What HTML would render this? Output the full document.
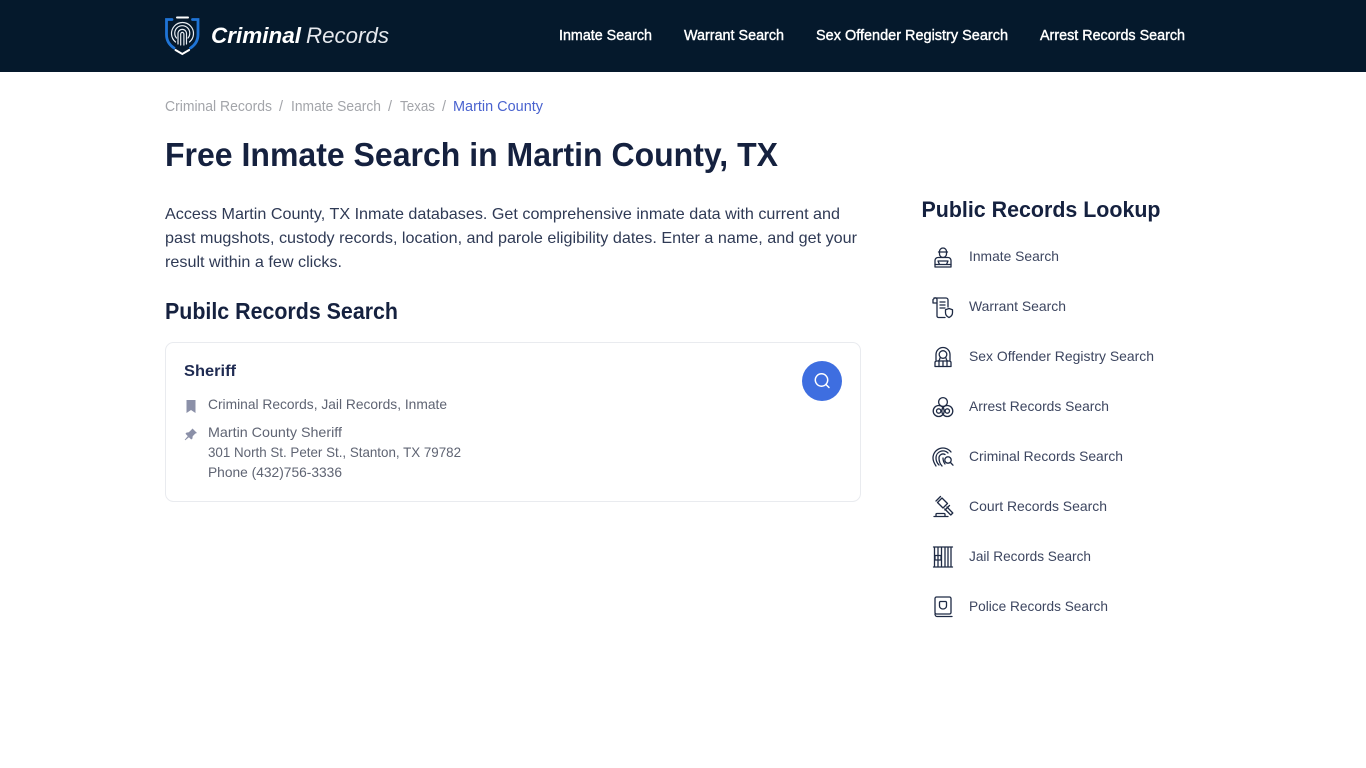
<!DOCTYPE html>
<html lang="en"><head><meta charset="utf-8"><title>Free Inmate Search in Martin County, TX</title>
<style>
html,body{margin:0;padding:0;background:#fff;width:1366px;height:768px;overflow:hidden}
svg{display:block;position:absolute;left:0;top:0}
text{font-family:"Liberation Sans",Arial,sans-serif;white-space:pre}
.nav{font-size:14.5px;fill:#fff;stroke:#fff;stroke-width:.4px}
.bc{font-size:14.5px;fill:#a3a5aa}
.p{font-size:16px;fill:#2f3a55}
.s{font-size:14px;fill:#3d4660}
.c{font-size:14px;fill:#5f6473}
.i{fill:none;stroke:#1e2a44;stroke-width:1.3;stroke-linecap:round;stroke-linejoin:round}
</style></head><body>
<svg width="1366" height="768" viewBox="0 0 1366 768" xmlns="http://www.w3.org/2000/svg">
<rect width="1366" height="72" fill="#05192c"/>
<!-- logo -->
<g fill="none" stroke-linecap="round">
<path d="M172 19.500h-5.500v15c0 6.500 3 10.500 7.500 13.500" stroke="#1f74d6" stroke-width="2.800"/>
<path d="M192.500 19.500h5.500v15c0 6.500-3 10.500-7.500 13.500" stroke="#1f74d6" stroke-width="2.800"/>
<path d="M177 17.500h11" stroke="#fff" stroke-width="2"/>
<path d="M175.500 50l6.800 4 6.800-4" stroke="#fff" stroke-width="2"/>
<g stroke="#e8edf2" stroke-width="1.200">
<path d="M175.500 42a11 11 0 1 1 14 0"/>
<path d="M176.500 38a7.500 7.500 0 1 1 11.500 0"/>
<path d="M178 44v-11a4.300 4.300 0 0 1 8.500 0v11"/>
<path d="M180.700 45v-11a1.600 1.600 0 0 1 3.200 0v11"/>
</g>
</g>
<text x="211" y="43" font-size="22" font-weight="700" font-style="italic" fill="#fff" textLength="90" lengthAdjust="spacingAndGlyphs">Criminal</text>
<text x="306" y="43" font-size="22" font-style="italic" fill="#e6e9ee" textLength="83" lengthAdjust="spacingAndGlyphs">Records</text>
<!-- nav -->
<text class="nav" x="559" y="40" textLength="93" lengthAdjust="spacingAndGlyphs">Inmate Search</text>
<text class="nav" x="684" y="40" textLength="100" lengthAdjust="spacingAndGlyphs">Warrant Search</text>
<text class="nav" x="816" y="40" textLength="192" lengthAdjust="spacingAndGlyphs">Sex Offender Registry Search</text>
<text class="nav" x="1040" y="40" textLength="145" lengthAdjust="spacingAndGlyphs">Arrest Records Search</text>
<!-- breadcrumb -->
<text class="bc" x="165" y="111" textLength="107" lengthAdjust="spacingAndGlyphs">Criminal Records</text>
<text class="bc" x="279" y="111">/</text>
<text class="bc" x="291" y="111" textLength="90" lengthAdjust="spacingAndGlyphs">Inmate Search</text>
<text class="bc" x="388" y="111">/</text>
<text class="bc" x="400" y="111" textLength="35" lengthAdjust="spacingAndGlyphs">Texas</text>
<text class="bc" x="442" y="111">/</text>
<text x="453" y="111" font-size="14.500" fill="#4a63cf" textLength="90" lengthAdjust="spacingAndGlyphs">Martin County</text>
<!-- title -->
<text x="165" y="166" font-size="33" font-weight="700" fill="#15213f" textLength="613" lengthAdjust="spacingAndGlyphs">Free Inmate Search in Martin County, TX</text>
<!-- paragraph -->
<text class="p" x="165" y="219" textLength="675" lengthAdjust="spacingAndGlyphs">Access Martin County, TX Inmate databases. Get comprehensive inmate data with current and</text>
<text class="p" x="165" y="243" textLength="692" lengthAdjust="spacingAndGlyphs">past mugshots, custody records, location, and parole eligibility dates. Enter a name, and get your</text>
<text class="p" x="165" y="267" textLength="177" lengthAdjust="spacingAndGlyphs">result within a few clicks.</text>
<text x="165" y="319" font-size="23" font-weight="700" fill="#15213f" textLength="233" lengthAdjust="spacingAndGlyphs">Pubilc Records Search</text>
<!-- card -->
<rect x="165.500" y="342.500" width="695" height="159" rx="8" fill="#fff" stroke="#e9ebef"/>
<text x="184" y="376" font-size="16" font-weight="700" fill="#1f2b52" textLength="52" lengthAdjust="spacingAndGlyphs">Sheriff</text>
<path d="M186.500 400h9v13l-4.500-3-4.500 3z" fill="#8b90a8"/>
<path d="M192.500 428.500l4.500 4.500-1.800.6-2.500 2.600-.3 2.400-1.200.9-2.300-2.300-3.600 3.100-.6-.6 3.100-3.600-2.300-2.300.9-1.200 2.400-.3 2.600-2.500z" fill="#8b90a8"/>
<text class="c" x="208" y="409" textLength="239" lengthAdjust="spacingAndGlyphs">Criminal Records, Jail Records, Inmate</text>
<text class="c" x="208" y="437" textLength="134" lengthAdjust="spacingAndGlyphs">Martin County Sheriff</text>
<text class="c" x="208" y="457" textLength="253" lengthAdjust="spacingAndGlyphs">301 North St. Peter St., Stanton, TX 79782</text>
<text class="c" x="208" y="477" textLength="134" lengthAdjust="spacingAndGlyphs">Phone (432)756-3336</text>
<circle cx="822" cy="381" r="20" fill="#3e6ee0"/>
<circle cx="821.500" cy="380" r="6.200" fill="none" stroke="#fff" stroke-width="1.500"/>
<path d="M826 384.500l3 3" stroke="#fff" stroke-width="1.500" stroke-linecap="round"/>
<!-- sidebar -->
<text x="921.500" y="217" font-size="22.500" font-weight="700" fill="#15213f" textLength="239" lengthAdjust="spacingAndGlyphs">Public Records Lookup</text>
<text class="s" x="969" y="261" textLength="90" lengthAdjust="spacingAndGlyphs">Inmate Search</text>
<text class="s" x="969" y="311" textLength="97" lengthAdjust="spacingAndGlyphs">Warrant Search</text>
<text class="s" x="969" y="361" textLength="185" lengthAdjust="spacingAndGlyphs">Sex Offender Registry Search</text>
<text class="s" x="969" y="411" textLength="140" lengthAdjust="spacingAndGlyphs">Arrest Records Search</text>
<text class="s" x="969" y="461" textLength="154" lengthAdjust="spacingAndGlyphs">Criminal Records Search</text>
<text class="s" x="969" y="511" textLength="138" lengthAdjust="spacingAndGlyphs">Court Records Search</text>
<text class="s" x="969" y="561" textLength="122" lengthAdjust="spacingAndGlyphs">Jail Records Search</text>
<text class="s" x="969" y="611" textLength="139" lengthAdjust="spacingAndGlyphs">Police Records Search</text>
<!-- icon: inmate -->
<g class="i">
<path d="M939.500 251.500a3.500 3.500 0 0 1 7 0M938.500 252h9M939.500 252.500v1.500a3.500 3.500 0 0 0 7 0v-1.500"/>
<path d="M935 267v-6.500a3 3 0 0 1 3-3h10a3 3 0 0 1 3 3v6.500z"/><path d="M938 261h10l-1.500 3.500h-7zM935 264.500h4.500M946.500 264.500h4.500"/>
</g>
<!-- icon: warrant -->
<g class="i">
<path d="M934 298h12a2 2 0 0 1 2 2v7"/><path d="M933 299.500v3.500h4v-3.400a1.700 1.700 0 0 0-3.300-.6"/>
<path d="M937 303v13a1.500 1.500 0 0 0 1.500 1.500h6.500"/><path d="M940 302h5M940 305h5M940 308h5"/>
<path d="M949 308.500l3.500 1.200v3c0 2.300-1.500 3.800-3.500 4.800-2-1-3.500-2.500-3.500-4.800v-3z"/>
</g>
<!-- icon: sex offender -->
<g class="i">
<path d="M936 360v-5.500a7 7 0 0 1 14 0v5.500"/><circle cx="943" cy="354.500" r="3.800"/><path d="M940 358c0 1-.5 2-1.500 3M946 358c0 1 .5 2 1.500 3"/>
<path d="M935 366.500v-4c0-1 1-1.500 2-1.500h12c1 0 2 .5 2 1.500v4z"/><path d="M939 361v5.500M943 361v5.500M947 361v5.500"/>
</g>
<!-- icon: arrest -->
<g class="i">
<circle cx="943" cy="402" r="4.400"/><circle cx="938.700" cy="411" r="5.500"/><circle cx="947.300" cy="411" r="5.500"/><circle cx="938.700" cy="411" r="2.200"/><circle cx="947.300" cy="411" r="2.200"/>
</g>
<!-- icon: fingerprint -->
<g class="i">
<path d="M936 466c-2-3-3-5-3-8a10 10 0 0 1 18-6"/><path d="M939 465c-2-2-3-4-3-7a7 7 0 0 1 12-5"/><path d="M942 466c-2-2-3-5-3-8a4 4 0 0 1 6-3.500"/>
<circle cx="948" cy="460" r="3.200"/><path d="M950.500 462.500l2.500 2.700"/><path d="M943 458c0 2 .5 4 2 6"/>
</g>
<!-- icon: gavel -->
<g class="i">
<path d="M942 498l-4.500 4.500 5.500 5.500 4.500-4.500zM940.500 496.500l-4.500 4.500M949.500 505.500l-4.500 4.500"/><path d="M947 507l5.800 6-2 2-6-6"/>
<path d="M934 516.500h14M936 516.500v-2a1 1 0 0 1 1-1h7a1 1 0 0 1 1 1v2"/>
</g>
<!-- icon: jail -->
<g class="i">
<path d="M933.500 547h19M933.500 567h19M934.500 547v20M938 547v20M941.500 547v20M945 547v20M948 547v20M951 547v20"/>
<rect x="935" y="555.500" width="6" height="4.500"/>
</g>
<!-- icon: police -->
<g class="i" stroke-width="1.400">
<rect x="935" y="597" width="16" height="17" rx="1.500"/><path d="M935 614c0 1.500 1 2.500 2 2.500h15"/>
<path d="M940 601.500h6l.5 1v3.500c0 1.500-1.500 3-3.500 3s-3.500-1.500-3.500-3v-3.500z"/>
</g>
</svg>
</body></html>
